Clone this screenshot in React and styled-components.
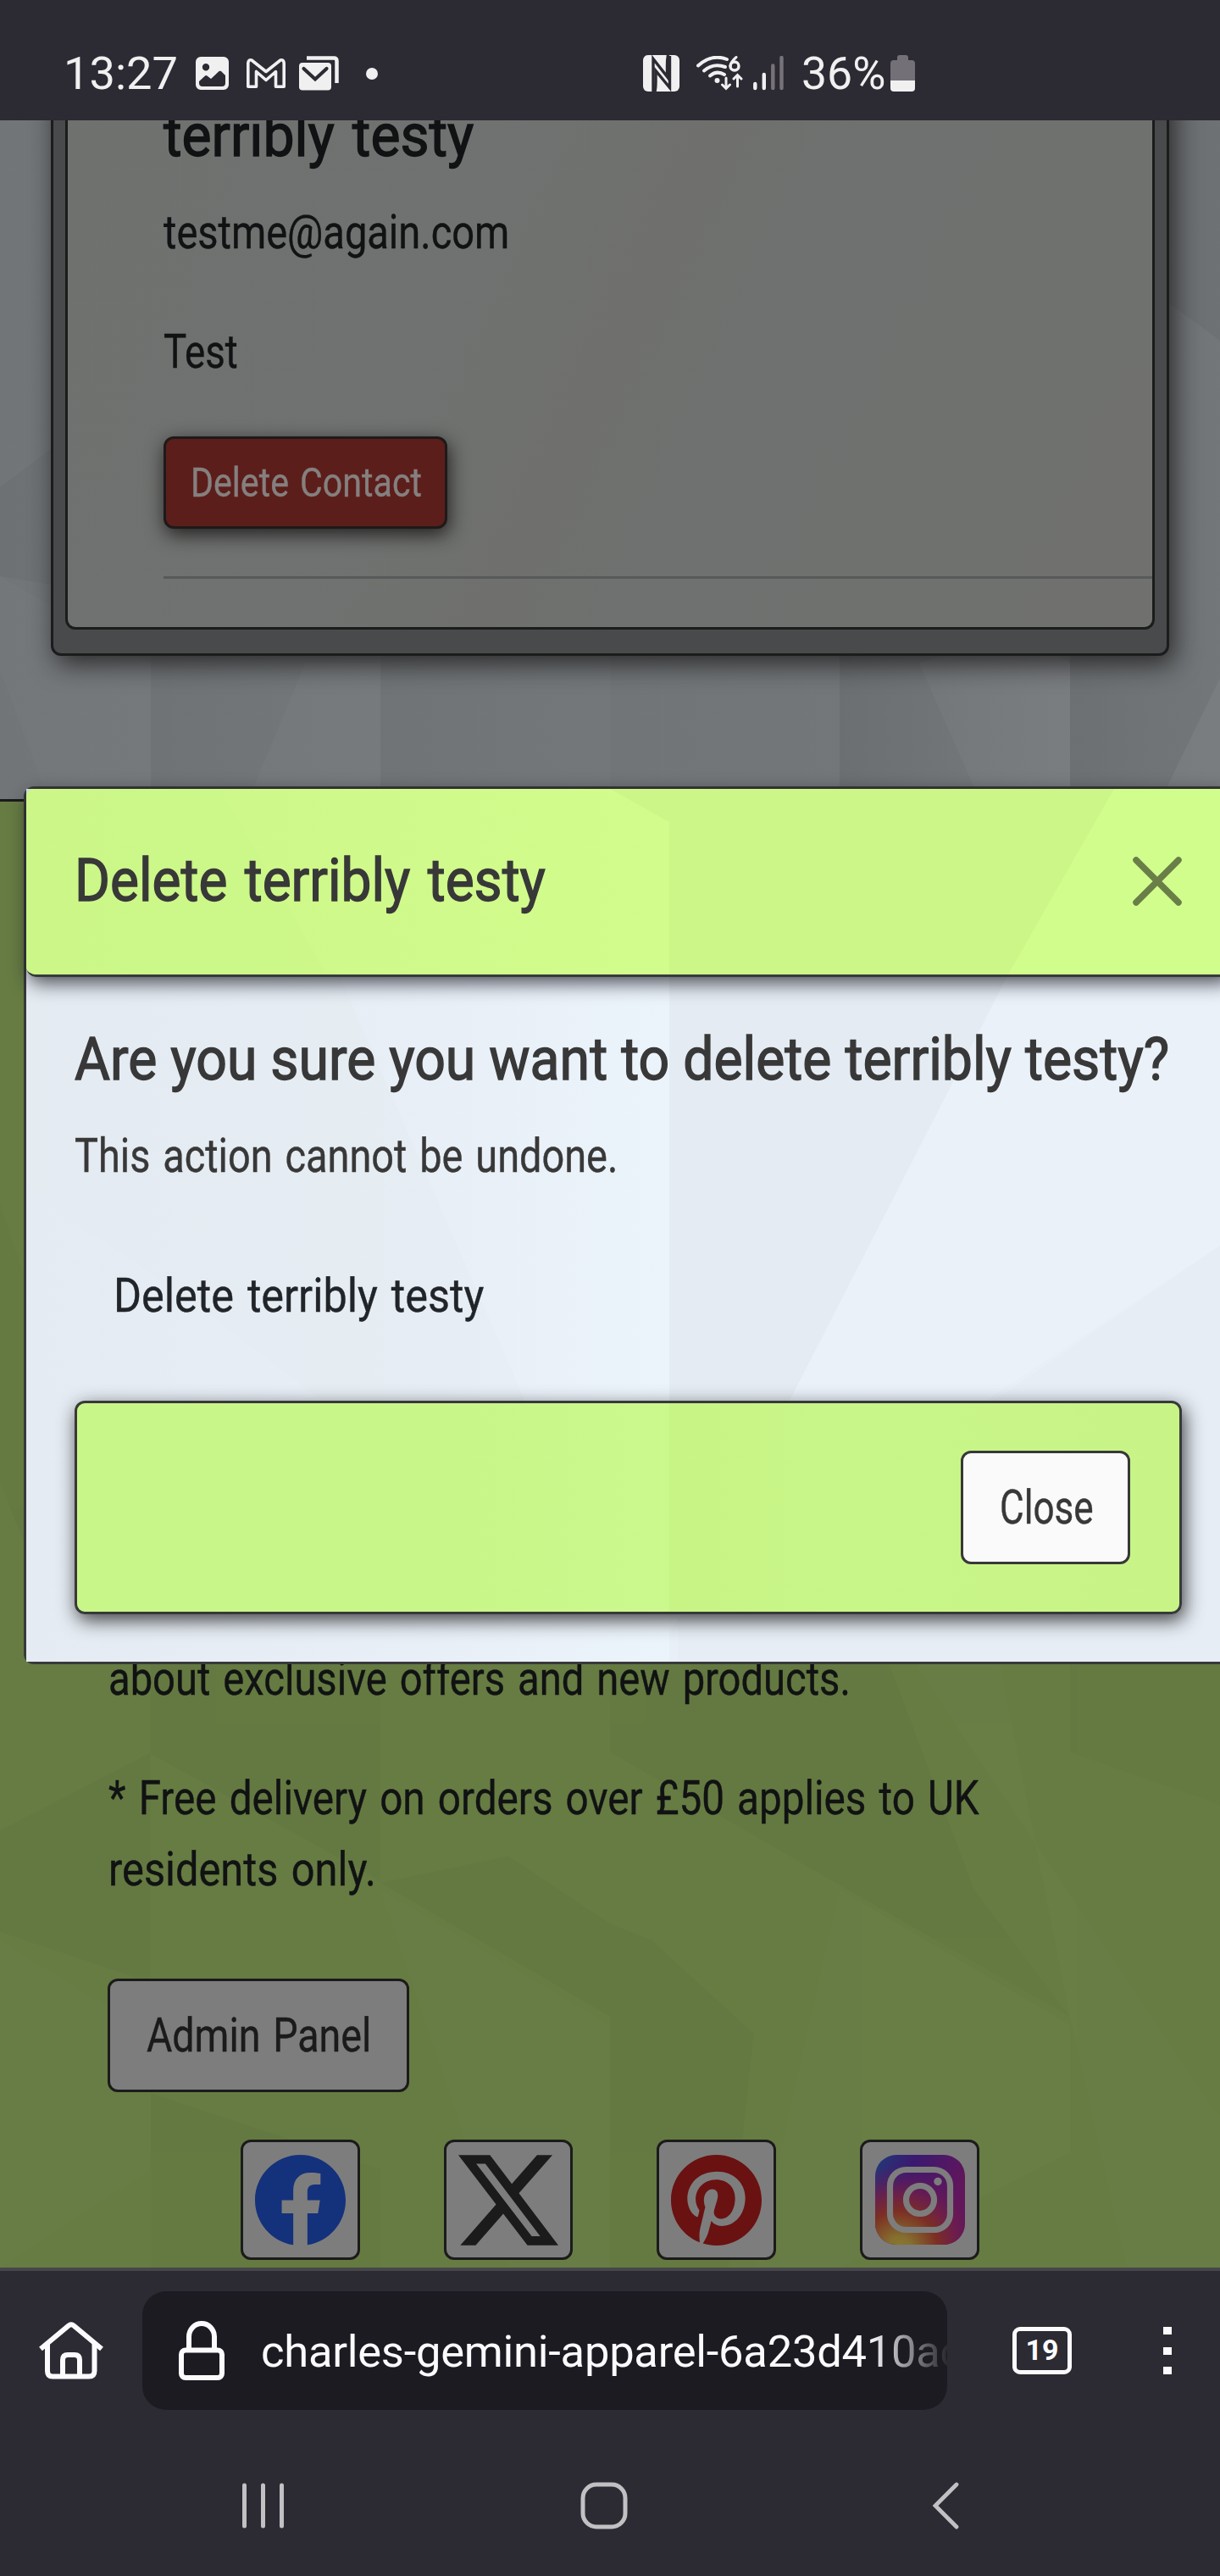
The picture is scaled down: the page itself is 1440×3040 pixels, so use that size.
import React, { useLayoutEffect, useRef, useState } from "react";
import styled, { createGlobalStyle } from "styled-components";

const GlobalStyle = createGlobalStyle`
  body { margin: 0; background: #2c2a33; }
  *, *::before, *::after { box-sizing: border-box; }
`;

/* ---------- condensed text ---------- */

const TextBox = styled.span`
  display: block;
  width: ${(p) => p.$width}px;
  white-space: nowrap;
`;

const TextInner = styled.span`
  display: inline-block;
  margin-left: -0.5px;
  transform-origin: 0 50%;
  word-spacing: ${(p) => (p.$tight ? 0 : 0.07)}em;
`;

function Condensed({ width, tight, children }) {
  const ref = useRef(null);
  const [scale, setScale] = useState(1);
  useLayoutEffect(() => {
    setScale(width / ref.current.offsetWidth);
  }, [width, children]);
  return (
    <TextBox $width={width}>
      <TextInner ref={ref} $tight={tight} style={{ transform: `scaleX(${scale})` }}>
        {children}
      </TextInner>
    </TextBox>
  );
}

/* ---------- phone frame ---------- */

const Phone = styled.div`
  width: 1440px;
  height: 3040px;
  display: flex;
  flex-direction: column;
  overflow: hidden;
  background: #2c2a33;
  font-family: Roboto, "Liberation Sans", sans-serif;
`;

const StatusBar = styled.header`
  height: 142px;
  flex: none;
  display: flex;
  align-items: center;
  padding: 31px 0 0 75px;
  color: #f1f0f1;
  font-size: 53px;
  line-height: 60px;
  svg { display: block; flex: none; }
`;

const StatusItem = styled.div`
  width: ${(p) => p.$w}px;
  margin-left: ${(p) => p.$gap || 0}px;
`;

const Viewport = styled.main`
  position: relative;
  height: 2534px;
  flex: none;
  overflow: hidden;
  background: #727679;
  font-size: 56px;
  line-height: 84px;
  color: #111213;
  -webkit-text-stroke: 0.4px currentColor;
`;

const Facets = styled.svg`
  position: absolute;
  inset: 0;
  display: block;
`;

/* ---------- page below the backdrop ---------- */

const Card = styled.section`
  position: relative;
  margin: -40px 60px 0;
  width: 1320px;
  height: 672px;
  padding: 0 14px 31px;
  border: 3px solid #1b1c1c;
  border-radius: 12px;
  background: #484a4b;
  box-shadow: 6px 10px 30px rgba(20, 18, 18, 0.75);
`;

const CardBody = styled.div`
  height: 638px;
  padding: 13px 0 0 113px;
  border: 3px solid #1b1c1c;
  border-top: 0;
  border-radius: 0 0 12px 12px;
  background: linear-gradient(115deg, #6f716f, #6f7270 35%, #6f706e 50%, #6e716f 60%, #70716f);
`;

const Heading = styled.h2`
  margin: 0 0 ${(p) => p.$mb ?? 30}px;
  font-size: 70px;
  line-height: 84px;
  font-weight: 400;
  -webkit-text-stroke: 1.4px currentColor;
`;

const Paragraph = styled.p`
  margin: 0 0 ${(p) => p.$mb ?? 57}px;
`;

const DangerButton = styled.button`
  display: block;
  width: 335px;
  height: 109px;
  margin-top: 58px;
  padding: 0 29px;
  border: 3px solid #1e1a1a;
  border-radius: 12px;
  background: #5c1e1b;
  color: #85807f;
  font: 400 49px/74px Roboto, sans-serif;
  text-align: left;
  box-shadow: 2px 7px 22px rgba(15, 12, 12, 0.8);
`;

const Rule = styled.hr`
  margin: 56px 0 0;
  border: 0;
  height: 3px;
  background: #585a59;
`;

const SiteFooter = styled.footer`
  position: relative;
  margin-top: 169px;
  height: 1733px;
  padding: 993px 128px 0;
  border-top: 3px solid #1a1b1a;
  background: #667c43;
  overflow: hidden;
`;

const FooterContent = styled.div`
  position: relative;
`;

const AdminButton = styled.button`
  display: block;
  width: 356px;
  height: 134px;
  margin-left: -1px;
  padding: 0 43px;
  border: 3px solid #1b1b1b;
  border-radius: 12px;
  background: #7d7d7d;
  color: #1b1b1b;
  font: 400 56px/84px Roboto, sans-serif;
  text-align: left;
`;

const SocialRow = styled.nav`
  display: flex;
  gap: 99px;
  margin: 56px 0 0 156px;
`;

const SocialLink = styled.a`
  display: flex;
  align-items: center;
  justify-content: center;
  width: ${(p) => p.$w || 141}px;
  height: 142px;
  border: 3px solid #1b1b1b;
  border-radius: 12px;
  background: #7d7d7d;
`;

/* ---------- modal ---------- */

const Modal = styled.div`
  position: absolute;
  left: 28px;
  top: 786px;
  width: 1427px;
  height: 1036px;
  border: 3px solid #38393a;
  border-radius: 12px;
  background: #e8eff6;
  color: #383838;
`;

const ModalHeader = styled.div`
  position: relative;
  display: flex;
  align-items: center;
  justify-content: space-between;
  height: 222px;
  padding: 0 57px 3px 57px;
  border-bottom: 3px solid #38393a;
  border-radius: 9px 9px 12px 12px;
  background: #cff98a;
  overflow: hidden;
  & > div { position: relative; }
  & > svg:last-child { position: relative; top: 1px; }
  ${Heading} { margin: 0; }
`;

const HeaderShadow = styled.div`
  position: relative;
  border-radius: 12px;
  box-shadow: 3px 7px 22px rgba(20, 20, 30, 0.75);
`;

const ModalBody = styled.div`
  position: relative;
  padding: 55px 57px 0;
`;

const DeleteLink = styled.a`
  display: block;
  margin: 81px 0 0 46px;
  color: #212529;
`;

const ModalFooter = styled.div`
  position: relative;
  display: flex;
  align-items: center;
  justify-content: flex-end;
  width: 1307px;
  height: 252px;
  margin-top: 82px;
  padding-right: 58px;
  border: 3px solid #38393a;
  border-radius: 12px;
  background: linear-gradient(90deg, #c9f689, #c9f689 35%, #ccf98d 53.6%, #c7f485 53.8%, #c9f688 70%, #c8f487);
  box-shadow: 3px 7px 22px rgba(20, 20, 20, 0.8);
`;

const CloseButton = styled.button`
  width: 200px;
  height: 134px;
  padding: 0 43px;
  border: 3px solid #383838;
  border-radius: 12px;
  background: #fafafa;
  color: #383838;
  font: 400 56px/84px Roboto, sans-serif;
  text-align: left;
`;

/* ---------- browser chrome ---------- */

const BrowserBar = styled.div`
  height: 184px;
  flex: none;
  display: flex;
  align-items: center;
  padding: 24px 0 16px 46px;
  border-top: 4px solid #47464b;
  color: #fbfbfe;
  svg { display: block; flex: none; }
`;

const UrlField = styled.div`
  display: flex;
  align-items: center;
  width: 950px;
  height: 140px;
  margin-left: 46px;
  padding-left: 43px;
  border-radius: 28px;
  background: #1c1b21;
  overflow: hidden;
`;

const UrlText = styled.div`
  width: 810px;
  margin-left: 43px;
  padding-top: 2px;
  font-size: 52.5px;
  letter-spacing: -0.25px;
  line-height: 70px;
  white-space: nowrap;
  overflow: hidden;
  color: #fbfbfe;
  mask-image: linear-gradient(90deg, #000 718px, transparent 816px);
`;

const TabCount = styled.div`
  display: flex;
  align-items: center;
  justify-content: center;
  width: 70px;
  height: 56px;
  margin-left: 77px;
  padding-bottom: 2px;
  border: 5px solid #fbfbfe;
  border-radius: 9px;
  font-size: 34px;
  line-height: 40px;
  font-weight: 700;
`;

const MenuDots = styled.div`
  display: flex;
  flex-direction: column;
  justify-content: space-between;
  width: 10px;
  height: 56px;
  margin-left: 108px;
  i { display: block; height: 9px; background: #fbfbfe; }
`;

const NavBar = styled.nav`
  display: flex;
  align-items: center;
  height: 180px;
  padding: 13px 0 0 284px;
  svg { display: block; }
`;

const NavItem = styled.div`
  margin-left: ${(p) => p.$gap || 0}px;
`;

/* ---------- drawings ---------- */

const seams = [
  { x: -93, o: 0.3 },
  { x: 178, o: 0.45 },
  { x: 449, o: 0.35 },
  { x: 720, o: 0.15 },
  { x: 991, o: 1 },
  { x: 1263, o: 0.85 },
];

const PageFacets = () => (
  <Facets width="1440" height="810" viewBox="0 142 1440 810">
    <defs>
      <linearGradient id="fold" x1="0" x2="1">
        <stop offset="0" stopColor="#6b6f71" />
        <stop offset="0.6" stopColor="#727679" />
        <stop offset="1" stopColor="#76797c" />
      </linearGradient>
    </defs>
    {seams.map((s) => (
      <rect key={s.x} x={s.x} y="142" width="272" height="810" fill="url(#fold)" opacity={s.o} />
    ))}
    <path d="M0 680 L178 783 V952 H60 L0 790Z" fill="#fff" opacity=".02" />
    <path d="M360 783 L290 952 H449 V783Z" fill="#fff" opacity=".025" />
    <path d="M1085 783 L1160 952 H1263 V783 L1200 740Z" fill="#fff" opacity=".03" />
    <path d="M1440 800 L1366 952 H1440Z" fill="#fff" opacity=".05" />
    <path d="M1380 358 L1440 402 V142 H1380Z" fill="#000" opacity=".04" />
    <path d="M0 575 L60 530 V690 L0 680Z" fill="#000" opacity=".03" />
  </Facets>
);

const FooterFacets = () => (
  <Facets width="1440" height="1733" viewBox="0 946 1440 1733">
    <g fill="#000" opacity=".016">
      <path d="M178 1964 H449 V2220 L178 2070Z" />
      <path d="M449 2222 L720 2380 V2270 L600 2190Z" />
      <path d="M720 1964 H991 L991 2225 L720 2068Z" />
      <path d="M991 1964 H1050 L1150 2230 L1263 2380 L991 2225Z" />
      <path d="M1263 1964 H1440 V2130 L1263 2068Z" />
      <path d="M0 2160 L178 2068 V2340 L0 2280Z" />
      <path d="M720 2380 V2676 H860 L890 2400 L770 2290 L720 2270Z" />
      <path d="M178 2470 L449 2560 V2676 H178Z" />
      <path d="M0 1420 L60 1600 V1900 L0 1750Z" />
    </g>
    <g fill="#fff" opacity=".012">
      <path d="M1080 1964 H1180 L1263 2380 L1330 2676 H1440 V2500Z" />
      <path d="M449 2230 L720 2390 V2676 H600Z" />
      <path d="M0 2290 L178 2400 V2560 L0 2676Z" />
      <path d="M991 2230 L1263 2390 V2540 L991 2676 L890 2676Z" />
    </g>
  </Facets>
);

const HeaderFacets = () => (
  <Facets width="1421" height="219" viewBox="31 931 1421 219">
    <defs>
      <linearGradient id="lime" x1="0" x2="1">
        <stop offset="0" stopColor="#ccf688" />
        <stop offset="1" stopColor="#d2fd8d" />
      </linearGradient>
    </defs>
    <rect x="31" y="931" width="759" height="219" fill="url(#lime)" />
    <path d="M31 931 H260 L385 1150 H31Z" fill="#ccf688" opacity=".6" />
    <path d="M720 931 H1315 L1190 1150 H790 V970Z" fill="#ccf687" />
    <path d="M1315 931 H1440 V1150 H1190Z" fill="#d1fd8c" />
  </Facets>
);

const BodyFacets = () => (
  <Facets width="1421" height="1030" viewBox="31 931 1421 1030">
    <defs>
      <linearGradient id="sheet" x1="0" x2="1">
        <stop offset="0" stopColor="#e4ebf2" />
        <stop offset="0.65" stopColor="#e8eff7" />
        <stop offset="1" stopColor="#ecf4fb" />
      </linearGradient>
    </defs>
    <rect x="31" y="931" width="759" height="1030" fill="url(#sheet)" />
    <path d="M790 1150 H1190 L790 1930Z" fill="#e4ebf2" />
    <path d="M1190 1150 H1440 V1470 L790 1900 V1930Z" fill="#eaf1f9" />
    <path d="M1440 1470 L800 1910 V1961 H1440Z" fill="#e6edf5" />
    <path d="M31 1400 L260 1560 L440 1700 H640 L400 1150 H31Z" fill="#e3eaf1" opacity=".4" />
  </Facets>
);

const ImageIcon = () => (
  <svg width="39" height="39" viewBox="0 0 39 39">
    <path
      fillRule="evenodd"
      fill="#f1f0f1"
      d="M6 0H33a6 6 0 0 1 6 6V33a6 6 0 0 1-6 6H6a6 6 0 0 1-6-6V6A6 6 0 0 1 6 0ZM12 8a4.2 4.2 0 1 0 0 8.4A4.2 4.2 0 0 0 12 8ZM4 31q0 4 4 4H31q4 0 4-4V22L30 17Q28 16 26.500 18L18 26 13.500 22.500Q12 21.500 10.500 23L4 29Z"
    />
  </svg>
);

const GmailIcon = () => (
  <svg width="46" height="35" viewBox="0 0 46 35" fill="none" stroke="#f1f0f1" strokeWidth="3.600" strokeLinejoin="round">
    <path d="M1.800 33.200V5.500Q2.200 1 6 2L23 15.500 40 2Q43.800 1 44.200 5.500V33.200H34.500V15.500L23 25.500 11.500 15.500V33.200Z" />
  </svg>
);

const MailStackIcon = () => (
  <svg width="47" height="41" viewBox="0 0 47 41" fill="none">
    <path d="M9 2.500H41Q44.500 2.500 44.500 6V32" stroke="#f1f0f1" strokeWidth="4.500" />
    <rect x="0" y="8" width="38" height="32.500" rx="4" fill="#f1f0f1" />
    <path d="M5.500 15 L19 27.500 32.500 15" stroke="#2c2a33" strokeWidth="4.200" strokeLinecap="round" />
  </svg>
);

const NfcIcon = () => (
  <svg width="43" height="43" viewBox="0 0 43 43">
    <rect width="43" height="43" rx="6" fill="#f1f0f1" />
    <path d="M12 43V4.500L28.500 25.500V12Q28.500 5 29.500 0" fill="none" stroke="#2c2a33" strokeWidth="3.400" />
    <path d="M31.500 1V38.500L15 18.500V32Q15 39 14 43" fill="none" stroke="#2c2a33" strokeWidth="3.400" />
  </svg>
);

const WifiIcon = () => (
  <svg width="55" height="41" viewBox="0 0 55 41" fill="none" stroke="#f1f0f1" strokeWidth="4" strokeLinecap="round">
    <path d="M2 11.500Q18 -3 36 4" />
    <path d="M9 17.500Q20 8 34 13" />
    <path d="M16 23.500Q24 16.500 33 22" />
    <circle cx="24.500" cy="29" r="3" fill="#f1f0f1" stroke="none" />
    <path d="M47 1.500Q40.500 7 40 12" strokeWidth="3" />
    <circle cx="45" cy="12" r="5" strokeWidth="3.400" />
    <path d="M35 26V38M30.500 34 35 38.500 39.500 34M48.500 36V23M44 27 48.500 22.500 53 27" strokeWidth="3" />
  </svg>
);

const SignalIcon = () => (
  <svg width="36" height="41" viewBox="0 0 36 41" strokeWidth="4.400" strokeLinecap="round">
    <path d="M2.300 33V38M12.800 22V38" stroke="#f1f0f1" />
    <path d="M23.300 11.500V38M33.500 2V38" stroke="#767479" />
  </svg>
);

const BatteryIcon = () => (
  <svg width="29" height="43" viewBox="0 0 29 43">
    <path d="M8 6V3Q8 0 11 0H18Q21 0 21 3V6H25Q29 6 29 10V30H0V10Q0 6 4 6Z" fill="#737177" />
    <path d="M0 30H29V39Q29 43 25 43H4Q0 43 0 39Z" fill="#f1f0f1" />
  </svg>
);

const FacebookIcon = () => (
  <svg width="107" height="107" viewBox="8 8 496 496">
    <path
      fill="#14317c"
      d="M504 256C504 119 393 8 256 8S8 119 8 256c0 123.780 90.690 226.380 209.250 245V327.690h-63V256h63v-54.640c0-62.150 37-96.480 93.670-96.480 27.140 0 55.520 4.840 55.520 4.840v61h-31.280c-30.800 0-40.410 19.120-40.410 38.730V256h68.780l-11 71.690h-57.780V501C413.310 482.380 504 379.780 504 256z"
    />
  </svg>
);

const XIcon = () => (
  <svg width="118" height="107" viewBox="26.800 48 460.200 416">
    <path
      fill="#1b1b1b"
      d="M389.200 48h70.600L305.600 224.200 487 464H345L233.700 318.600 106.500 464H35.800L200.700 275.500 26.800 48H172.400L272.900 180.900 389.200 48zM364.400 421.800h39.100L151.100 88h-42L364.400 421.800z"
    />
  </svg>
);

const PinterestIcon = () => (
  <svg width="107" height="107" viewBox="0 8 496 496">
    <path
      fill="#6a1112"
      d="M496 256c0 137-111 248-248 248-25.600 0-50.200-3.900-73.400-11.100 10.100-16.500 25.200-43.500 30.800-65 3-11.600 15.400-59 15.400-59 8.100 15.400 31.700 28.500 56.800 28.500 74.800 0 128.700-68.800 128.700-154.300 0-81.900-66.900-143.200-152.900-143.200-107 0-163.900 71.800-163.900 150.100 0 36.400 19.400 81.700 50.300 96.100 4.700 2.200 7.200 1.200 8.300-3.300.8-3.400 5-20.300 6.900-28.100.6-2.500.3-4.700-1.700-7.100-10.100-12.500-18.300-35.300-18.300-56.600 0-54.700 41.400-107.600 112-107.600 60.900 0 103.600 41.500 103.600 100.900 0 67.100-33.900 113.600-78 113.600-24.300 0-42.600-20.100-36.700-44.800 7-29.500 20.500-61.300 20.500-82.600 0-19-10.200-34.900-31.400-34.900-24.900 0-44.900 25.700-44.900 60.200 0 22 7.400 36.800 7.400 36.800s-24.500 103.800-29 123.200c-5 21.400-3 51.600-.9 71.200C65.400 450.900 0 361.100 0 256 0 119 111 8 248 8s248 111 248 248z"
    />
  </svg>
);

const InstagramIcon = () => (
  <svg width="106" height="106" viewBox="0 0 106 106">
    <defs>
      <linearGradient id="igBase" x1="0" y1="0" x2="1" y2=".35">
        <stop offset="0" stopColor="#223a78" />
        <stop offset=".4" stopColor="#3a1a70" />
        <stop offset="1" stopColor="#63165a" />
      </linearGradient>
      <radialGradient id="igWarm" cx=".27" cy="1.050" r=".95">
        <stop offset="0" stopColor="#8a7a2c" />
        <stop offset=".14" stopColor="#85702f" />
        <stop offset=".45" stopColor="#7c2e24" />
        <stop offset=".65" stopColor="#702046" stopOpacity=".9" />
        <stop offset="1" stopColor="#5c1566" stopOpacity="0" />
      </radialGradient>
    </defs>
    <rect width="106" height="106" rx="25" fill="url(#igBase)" />
    <rect width="106" height="106" rx="25" fill="url(#igWarm)" />
    <g fill="none" stroke="#7d7d7d" strokeWidth="7.200">
      <rect x="17.500" y="17.500" width="71" height="71" rx="19" />
      <circle cx="53" cy="53" r="16.500" />
    </g>
    <circle cx="74" cy="31.500" r="4.700" fill="#7d7d7d" />
  </svg>
);

const CrossIcon = () => (
  <svg width="58" height="58" viewBox="0 0 58 58" stroke="#6a7e48" strokeWidth="7.500" strokeLinecap="round">
    <path d="M4 4 54 54M54 4 4 54" />
  </svg>
);

const HomeIcon = () => (
  <svg width="76" height="68" viewBox="0 0 76 68" fill="none" stroke="#fbfbfe" strokeWidth="6">
    <path d="M2 32 35 4.500Q38 2 41 4.500L74 32" />
    <path d="M10 25V58Q10 64.500 16 64.500H59Q65.500 64.500 65.500 58V25" />
    <path d="M28 64V45Q28 39 34 39H42Q48 39 48 45V64" />
  </svg>
);

const LockIcon = () => (
  <svg width="54" height="70" viewBox="0 0 54 70" fill="none" stroke="#fbfbfe" strokeWidth="6">
    <rect x="3" y="34.500" width="48" height="32.500" rx="5" />
    <path d="M12 34V18.500A15 15.500 0 0 1 42 18.500V34" />
  </svg>
);

const RecentsIcon = () => (
  <svg width="53" height="56" viewBox="0 0 53 56" stroke="#c1c0c3" strokeWidth="5" strokeLinecap="round">
    <path d="M4.500 4V52M26.500 4V52M48.500 4V52" />
  </svg>
);

const HomeKeyIcon = () => (
  <svg width="56" height="56" viewBox="0 0 56 56">
    <rect x="3" y="3" width="50" height="50" rx="16" fill="none" stroke="#c1c0c3" strokeWidth="5" />
  </svg>
);

const BackKeyIcon = () => (
  <svg width="32" height="58" viewBox="0 0 32 58" fill="none" stroke="#c1c0c3" strokeWidth="4.800" strokeLinecap="round">
    <path d="M29 4 4 29 29 54" />
  </svg>
);

export default function App() {
  return (
    <>
      <GlobalStyle />
      <Phone>
        <StatusBar>
          <StatusItem $w={133}><Condensed width={135}>13:27</Condensed></StatusItem>
          <StatusItem $w={39} $gap={23}><ImageIcon /></StatusItem>
          <StatusItem $w={46} $gap={21}><GmailIcon /></StatusItem>
          <StatusItem $w={47} $gap={16}><MailStackIcon /></StatusItem>
          <StatusItem $w={14} $gap={32}>
            <svg width="14" height="14"><circle cx="7" cy="7" r="7" fill="#f1f0f1" /></svg>
          </StatusItem>
          <StatusItem $w={43} $gap={313}><NfcIcon /></StatusItem>
          <StatusItem $w={55} $gap={20}><WifiIcon /></StatusItem>
          <StatusItem $w={36} $gap={12}><SignalIcon /></StatusItem>
          <StatusItem $w={99} $gap={21}><Condensed width={99}>36%</Condensed></StatusItem>
          <StatusItem $w={29} $gap={6}><BatteryIcon /></StatusItem>
        </StatusBar>

        <Viewport>
          <PageFacets />
          <Card>
            <CardBody>
              <Heading><Condensed width={366}>terribly testy</Condensed></Heading>
              <Paragraph><Condensed width={408}>testme@again.com</Condensed></Paragraph>
              <Paragraph><Condensed width={88}>Test</Condensed></Paragraph>
              <DangerButton><Condensed width={273}>Delete Contact</Condensed></DangerButton>
              <Rule />
            </CardBody>
          </Card>

          <SiteFooter>
            <FooterFacets />
            <FooterContent>
              <Paragraph><Condensed width={876}>about exclusive offers and new products.</Condensed></Paragraph>
              <Paragraph $mb={87}>
                <Condensed width={1028}>* Free delivery on orders over £50 applies to UK</Condensed>
                <Condensed width={316}>residents only.</Condensed>
              </Paragraph>
              <AdminButton><Condensed width={265}>Admin Panel</Condensed></AdminButton>
              <SocialRow>
                <SocialLink><FacebookIcon /></SocialLink>
                <SocialLink $w={152}><XIcon /></SocialLink>
                <SocialLink><PinterestIcon /></SocialLink>
                <SocialLink><InstagramIcon /></SocialLink>
              </SocialRow>
            </FooterContent>
          </SiteFooter>

          <Modal>
            <BodyFacets />
            <HeaderShadow>
              <ModalHeader>
                <HeaderFacets />
                <div><Heading as="h5"><Condensed width={556}>Delete terribly testy</Condensed></Heading></div>
                <CrossIcon />
              </ModalHeader>
            </HeaderShadow>
            <ModalBody>
              <Heading as="h4">
                <Condensed width={1292} tight>Are you sure you want to delete terribly testy?</Condensed>
              </Heading>
              <Paragraph $mb={0}><Condensed width={641}>This action cannot be undone.</Condensed></Paragraph>
              <DeleteLink><Condensed width={437}>Delete terribly testy</Condensed></DeleteLink>
              <ModalFooter>
                <CloseButton><Condensed width={111}>Close</Condensed></CloseButton>
              </ModalFooter>
            </ModalBody>
          </Modal>
        </Viewport>

        <BrowserBar>
          <HomeIcon />
          <UrlField>
            <LockIcon />
            <UrlText>charles-gemini-apparel-6a23d410ac</UrlText>
          </UrlField>
          <TabCount>19</TabCount>
          <MenuDots><i /><i /><i /></MenuDots>
        </BrowserBar>

        <NavBar>
          <NavItem><RecentsIcon /></NavItem>
          <NavItem $gap={348}><HomeKeyIcon /></NavItem>
          <NavItem $gap={359}><BackKeyIcon /></NavItem>
        </NavBar>
      </Phone>
    </>
  );
}
